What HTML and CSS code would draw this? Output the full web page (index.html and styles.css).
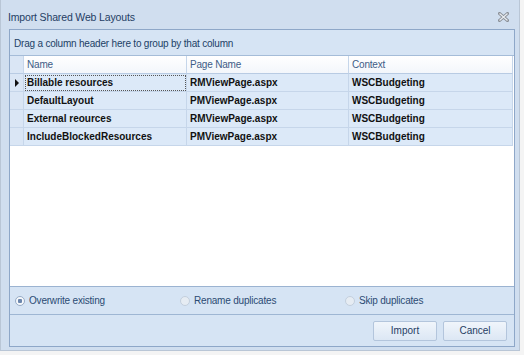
FILE: index.html
```html
<!DOCTYPE html>
<html lang="en">
<head>
  <meta charset="UTF-8" />
  <title>Import Shared Web Layouts</title>
  <link rel="stylesheet" href="styles.css">
</head>
<body>
  <div class="window">
    <div class="titlebar">
      <span class="title">Import Shared Web Layouts</span>
      <svg class="close" width="11" height="10" viewBox="0 0 11 10">
        <path d="M1.5 1.5 L9.5 8.5 M9.5 1.5 L1.5 8.5" stroke="#8a8f96" stroke-width="3" stroke-linecap="square"/>
        <path d="M1.5 1.5 L9.5 8.5 M9.5 1.5 L1.5 8.5" stroke="#e9edf2" stroke-width="1.2"/>
      </svg>
    </div>

    <div class="panel">
      <div class="group-area">Drag a column header here to group by that column</div>

      <div class="grid">
        <div class="row head">
          <div class="cell ind"></div>
          <div class="cell c-name">Name</div>
          <div class="cell c-page">Page Name</div>
          <div class="cell c-ctx">Context</div>
        </div>
        <div class="row data">
          <div class="cell ind"><span class="arrow"></span></div>
          <div class="cell c-name focus">Billable resources</div>
          <div class="cell c-page">RMViewPage.aspx</div>
          <div class="cell c-ctx">WSCBudgeting</div>
        </div>
        <div class="row data">
          <div class="cell ind"></div>
          <div class="cell c-name">DefaultLayout</div>
          <div class="cell c-page">PMViewPage.aspx</div>
          <div class="cell c-ctx">WSCBudgeting</div>
        </div>
        <div class="row data">
          <div class="cell ind"></div>
          <div class="cell c-name">External reources</div>
          <div class="cell c-page">RMViewPage.aspx</div>
          <div class="cell c-ctx">WSCBudgeting</div>
        </div>
        <div class="row data">
          <div class="cell ind"></div>
          <div class="cell c-name">IncludeBlockedResources</div>
          <div class="cell c-page">PMViewPage.aspx</div>
          <div class="cell c-ctx">WSCBudgeting</div>
        </div>
      </div>

      <div class="options">
        <label class="opt"><span class="radio on"></span>Overwrite existing</label>
        <label class="opt"><span class="radio"></span>Rename duplicates</label>
        <label class="opt"><span class="radio"></span>Skip duplicates</label>
      </div>

      <div class="buttons">
        <button class="btn">Import</button>
        <button class="btn">Cancel</button>
      </div>
    </div>
  </div>
</body>
</html>
```

FILE: styles.css
```css
body {
  margin: 0;
  background: #f4f4f4;
  font-family: 'Liberation Sans', Arial, sans-serif;
  font-size: 10px;
  letter-spacing: -0.2px;
}
.window {
  width: 520px;
  height: 351px;
  border: 1px solid #b9c6d6;
  border-top: none;
  background: #d0deef;
  display: flex;
  flex-direction: column;
  box-sizing: border-box;
}
.titlebar {
  height: 29px;
  display: flex;
  align-items: center;
  justify-content: space-between;
  padding: 0 10px 0 7px;
  flex-shrink: 0;
}
.title {
  color: #1f3d64;
  font-size: 10.5px;
  letter-spacing: -0.15px;
  margin-top: 5px;
}
.close {
  margin-top: 4px;
}
.panel {
  margin: 0 4px 0 8px;
  height: 316px;
  border: 1px solid #8ea7c8;
  display: flex;
  flex-direction: column;
  background: #d6e4f4;
}
.group-area {
  height: 25px;
  line-height: 27px;
  padding-left: 4px;
  color: #213f66;
  border-bottom: 1px solid #a5bcd8;
  background: #d6e4f4;
}
.grid {
  flex: 1;
  background: #fff;
  border-bottom: 1px solid #9bb3d1;
}
.row {
  display: flex;
  height: 18px;
}
.cell {
  box-sizing: border-box;
  border-right: 1px solid #c6d6ea;
  border-bottom: 1px solid #c6d6ea;
  padding-left: 3px;
  line-height: 17px;
  white-space: nowrap;
  overflow: hidden;
}
.ind { width: 14px; padding: 0; position: relative; }
.c-name { width: 163px; }
.c-page { width: 162px; }
.c-ctx { width: 164px; }
.head .cell {
  background: linear-gradient(#ffffff, #f3f6fb);
  color: #3e5c86;
  border-bottom-color: #b8cbe3;
}
.head .ind { background: #dae6f5; }
.data .cell {
  background: #dce9f8;
  color: #111;
  font-weight: bold;
  letter-spacing: 0;
}
.data .ind { background: #dae6f5; }
.focus {
  outline: 1px dotted #555;
  outline-offset: -2px;
}
.arrow {
  position: absolute;
  left: 5px;
  top: 5px;
  border-left: 4px solid #111;
  border-top: 4px solid transparent;
  border-bottom: 4px solid transparent;
}
.options {
  height: 27px;
  flex-shrink: 0;
  display: flex;
  align-items: center;
  padding-left: 5px;
  color: #2b4b73;
  border-bottom: 1px solid #9eb6d3;
}
.opt {
  display: flex;
  align-items: center;
  width: 165px;
}
.radio {
  width: 8px;
  height: 8px;
  border-radius: 50%;
  border: 1px solid #c3cfdd;
  background: #e6ecf3;
  margin-right: 4px;
  box-sizing: content-box;
}
.radio.on {
  background: radial-gradient(circle, #6b86ad 0 2px, #f5f8fb 2.5px);
  border-color: #98acc6;
}
.buttons {
  height: 31px;
  flex-shrink: 0;
  display: flex;
  justify-content: flex-end;
  align-items: center;
  gap: 6px;
  padding-right: 7px;
}
.btn {
  width: 64px;
  height: 20px;
  font-family: 'Liberation Sans', Arial, sans-serif;
  font-size: 10px;
  color: #1f3d64;
  border: 1px solid #b3c5dc;
  border-radius: 2px;
  background: linear-gradient(#f0f5fb, #dce7f4);
  padding: 0;
}
```
